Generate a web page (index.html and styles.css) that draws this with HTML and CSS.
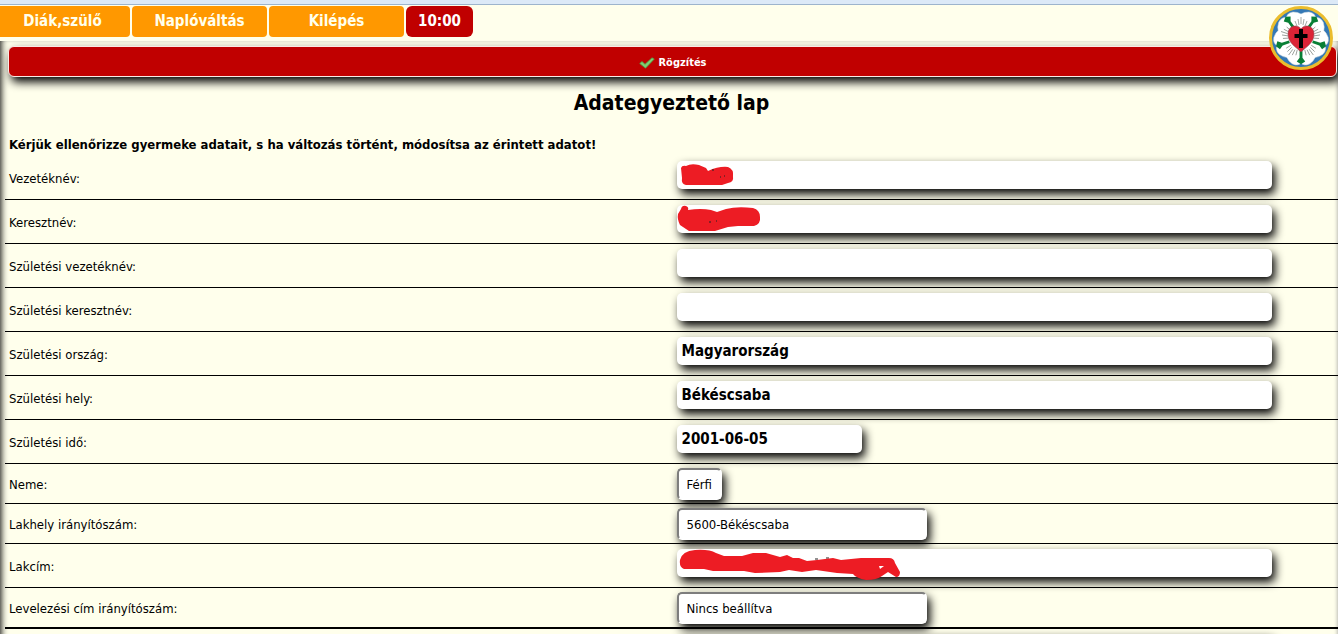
FILE: index.html
```html
<!DOCTYPE html>
<html lang="hu">
<head>
<meta charset="utf-8">
<title>Adategyeztető lap</title>
<link rel="stylesheet" href="styles.css">
</head>
<body>
<header class="top">
  <nav class="menu">
    <a class="tab" href="#">Diák,szülő</a>
    <a class="tab" href="#">Naplóváltás</a>
    <a class="tab" href="#">Kilépés</a>
    <span class="clock">10:00</span>
  </nav>
  <svg class="logo" viewBox="0 0 66 66" aria-hidden="true">
    <defs>
      <g id="petal">
        <path d="M33 33L18 15Q18 8 25 7Q30 7 33 9Q36 7 41 7Q48 8 48 15Z" fill="#fff" stroke="#d5dfe2" stroke-width=".5"/>
        <path d="M33 12V19M30 14L31 20M36 14L35 20M27 16L29 21M39 16L37 21" stroke="#8d948f" stroke-width=".8" fill="none"/>
      </g>
      <path id="sepal" d="M31.500 46L31.500 54L28.500 58L33 61L37.500 58L34.500 54L34.500 46Z" fill="#087f35"/>
    </defs>
    <circle cx="33" cy="33" r="30.500" fill="#3478b5" stroke="#ebbd2d" stroke-width="3"/>
    <use href="#petal"/>
    <use href="#petal" transform="rotate(72 33 33)"/>
    <use href="#petal" transform="rotate(144 33 33)"/>
    <use href="#petal" transform="rotate(216 33 33)"/>
    <use href="#petal" transform="rotate(288 33 33)"/>
    <g transform="translate(33 33) scale(.94) translate(-33 -33)">
      <use href="#sepal"/>
      <use href="#sepal" transform="rotate(72 33 33)"/>
      <use href="#sepal" transform="rotate(144 33 33)"/>
      <use href="#sepal" transform="rotate(216 33 33)"/>
      <use href="#sepal" transform="rotate(288 33 33)"/>
    </g>
    <path d="M33 47C28 42 20 38 20 29C20 20 30 19 33 24C36 19 46 20 46 29C46 38 38 42 33 47Z" fill="#dc2336" stroke="#8b4650" stroke-width=".6"/>
    <path d="M31 24H35V29H39.500V33H35V43H31V33H26.500V29H31Z" fill="#000"/>
  </svg>
</header>
<main class="panel">
<form class="sheet">
  <button class="save" type="button">
    <svg class="tick" viewBox="0 0 16 12" aria-hidden="true"><path d="M.7 6.500L3 4.500L6 7.300L13 .8L15.300 2L6.500 11.200Z" fill="#7fce72" stroke="#4d9c43" stroke-width=".8" stroke-linejoin="round"/></svg>
    Rögzítés
  </button>
  <h1 class="title">Adategyeztető lap</h1>
  <p class="intro">Kérjük ellenőrizze gyermeke adatait, s ha változás történt, módosítsa az érintett adatot!</p>

  <div class="row">
    <label class="name" for="f1">Vezetéknév:</label>
    <div class="cell"><input class="field" id="f1" type="text">
      <svg class="mark" width="230" height="34" aria-hidden="true"><path d="M4 7Q5 4 9 5Q14 2 22 4L29 7L31 10Q42 5 51 6Q57 8 56 16Q57 21 51 22L45 24H9Q4 23 5 17Z" fill="#ed1c24"/><path d="M35 9H37M43 16H44M47 15H48" stroke="#222"/></svg></div>
  </div>
  <div class="row">
    <label class="name" for="f2">Keresztnév:</label>
    <div class="cell"><input class="field" id="f2" type="text">
      <svg class="mark" width="230" height="34" aria-hidden="true"><path d="M4 4Q5 0 9 1Q12 2 11 5Q24 3 34 5L40 7L49 4Q60 1 76 3Q83 5 83 12Q84 19 77 21H61L51 22L38 26H12L3 20Q0 14 1 9Z" fill="#ed1c24"/><path d="M32 17H34M39 16H40" stroke="#222"/></svg></div>
  </div>
  <div class="row">
    <label class="name" for="f3">Születési vezetéknév:</label>
    <div class="cell"><input class="field" id="f3" type="text"></div>
  </div>
  <div class="row">
    <label class="name" for="f4">Születési keresztnév:</label>
    <div class="cell"><input class="field" id="f4" type="text"></div>
  </div>
  <div class="row">
    <label class="name" for="f5">Születési ország:</label>
    <div class="cell"><input class="field" id="f5" type="text" value="Magyarország"></div>
  </div>
  <div class="row">
    <label class="name" for="f6">Születési hely:</label>
    <div class="cell"><input class="field" id="f6" type="text" value="Békéscsaba"></div>
  </div>
  <div class="row">
    <label class="name" for="f7">Születési idő:</label>
    <div class="cell"><input class="field date" id="f7" type="text" value="2001-06-05"></div>
  </div>
  <div class="row pick">
    <label class="name" for="f8">Neme:</label>
    <div class="cell"><select class="choice short" id="f8"><option>Férfi</option></select></div>
  </div>
  <div class="row pick">
    <label class="name" for="f9">Lakhely irányítószám:</label>
    <div class="cell"><select class="choice" id="f9"><option>5600-Békéscsaba</option></select></div>
  </div>
  <div class="row">
    <label class="name" for="f10">Lakcím:</label>
    <div class="cell"><input class="field" id="f10" type="text">
      <svg class="mark" width="230" height="34" aria-hidden="true"><path d="M138 10H141M149 9H152" stroke="#222"/><path d="M3 11Q5 2 18 1Q32 0 39 4L47 7H65L76 4H89L103 8L110 6L116 9H122L130 12L140 11L156 9L164 11L184 9H212Q217 9 218 14L223 23Q223 28 219 28L211 23L205 27Q200 31 189 31Q179 29 176 25L160 24L139 21L125 23L112 21L103 23L78 24L67 22H36L27 20H7Q2 18 3 11Z" fill="#ed1c24"/><path d="M202 17H207L203 20Z" fill="#fff"/></svg></div>
  </div>
  <div class="row pick last">
    <label class="name" for="f11">Levelezési cím irányítószám:</label>
    <div class="cell"><select class="choice" id="f11"><option>Nincs beállítva</option></select></div>
  </div>
  <div class="row">
    <span class="name"></span>
    <div class="cell"><input class="field" type="text" aria-label="Levelezési cím"></div>
  </div>
</form>
</main>
</body>
</html>
```
FILE: styles.css
```css
* { box-sizing: border-box; }

body {
  margin: 0;
  height: 100vh;
  overflow: hidden;
  background: #ffffec;
  color: #000;
  font-family: Tahoma, "DejaVu Sans Condensed", "DejaVu Sans", sans-serif;
  font-size: 13px;
}

.top {
  position: relative;
  border-top: 4px solid #dce9f7;
  box-shadow: inset 0 1px #9db4cc;
  padding-top: 2px;
}

.menu {
  display: flex;
  gap: 2px;
  margin-left: -5px;
  height: 31px;
  font-size: 15px;
  font-weight: bold;
  line-height: 31px;
  text-align: center;
}

.tab {
  width: 135px;
  border-radius: 4px;
  background: #ff9800;
  color: #ffffec;
  text-decoration: none;
}

.clock {
  width: 67px;
  border-radius: 6px;
  background: #c00000;
  color: #fff;
}

.logo {
  position: absolute;
  z-index: 2;
  top: 1px;
  right: 4px;
  width: 66px;
  height: 66px;
}

.panel {
  margin-top: 4px;
  box-shadow: inset 6px 0 7px -5px #000, inset -3px 0 4px -3px #999;
}

.sheet {
  padding: 5px 0 0 5px;
}

.save {
  display: flex;
  align-items: center;
  justify-content: center;
  gap: 4px;
  width: calc(100% - 4px);
  height: 31px;
  margin-left: 3px;
  padding: 2px 0 0;
  border: 1px solid #fbe9e4;
  border-radius: 6px;
  background: #c00000;
  box-shadow: 3px 5px 10px #000;
  color: #fff;
  font: bold 11px Tahoma, "DejaVu Sans Condensed", "DejaVu Sans", sans-serif;
}

.tick {
  width: 16px;
  height: 12px;
}

.title {
  margin: 12px 0 0;
  font-size: 21px;
  line-height: 28px;
  text-align: center;
}

.intro {
  margin: 20px 0 3px;
  padding-left: 4px;
  font-weight: bold;
  line-height: 16px;
}

.row {
  display: grid;
  grid-template-columns: 1fr 1fr;
  align-items: center;
  height: 44px;
  border-bottom: 1px solid #000;
}

.pick { height: 40px; }

.last {
  height: 41px;
  border-bottom-width: 2px;
}

.name { padding: 1px 0 0 4px; }

.cell {
  position: relative;
  align-self: start;
  padding: 5px 0 0 5px;
}

.pick .cell { padding-top: 4px; }

.field {
  display: block;
  width: 90%;
  height: 28px;
  padding: 0 5px;
  border: 0;
  border-radius: 5px;
  background: #fff;
  box-shadow: 3px 5px 10px #000;
  font: bold 15px Tahoma, "DejaVu Sans Condensed", "DejaVu Sans", sans-serif;
}

.date { width: 185px; }

.choice {
  display: block;
  appearance: none;
  width: 250px;
  height: 32px;
  padding: 0 8px;
  border: 2px solid #fff;
  border-top-color: #7d7d7d;
  border-left-color: #7d7d7d;
  border-radius: 5px;
  background: #fff;
  box-shadow: 3px 5px 10px #000;
  color: #000;
  font: 13px Tahoma, "DejaVu Sans Condensed", "DejaVu Sans", sans-serif;
}

.short {
  width: 45px;
  padding-right: 4px;
}

.mark {
  position: absolute;
  top: 5px;
  left: 5px;
  pointer-events: none;
}
```
